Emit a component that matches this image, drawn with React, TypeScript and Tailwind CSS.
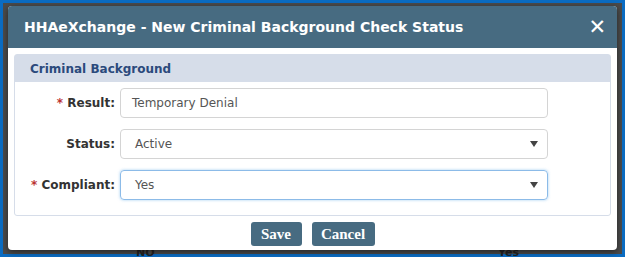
import React from "react";

const verdana = { fontFamily: '"DejaVu Sans", Verdana, sans-serif' };

function Caret() {
  return (
    <svg width="8" height="6" viewBox="0 0 8 6" className="shrink-0">
      <path d="M0 0 L8 0 L4 6 Z" fill="#444" />
    </svg>
  );
}

export default function App() {
  return (
    <div className="w-[625px] h-[257px] bg-[#0b6cc2] p-[3px] overflow-hidden" style={verdana}>
      <div className="relative w-full h-full bg-[#4b4b4b] pl-[5px] pr-[5px] pt-[3px]">
        <div className="absolute left-[133px] top-[244px] text-[11px] font-bold text-[#222] leading-none">NO</div>
        <div className="absolute left-[495px] top-[244px] text-[11px] font-bold text-[#222] leading-none">Yes</div>
        <div className="relative w-[609px] h-[244px] bg-white rounded-[4px] overflow-hidden shadow-[0_2px_6px_rgba(0,0,0,0.5)] flex flex-col">
          <div className="h-[42px] bg-[#476b81] flex items-center justify-between pl-[16px] pr-[11px] shrink-0">
            <span className="text-white font-bold text-[14px]">HHAeXchange - New Criminal Background Check Status</span>
            <span className="text-white font-bold text-[21px] leading-none">✕</span>
          </div>
          <div className="px-[6px] pt-[6px] flex-1 flex flex-col">
            <div className="border border-[#d6dde9] rounded-[3px] h-[162px] flex flex-col">
              <div className="h-[27px] bg-[#d6dde9] flex items-center pl-[15px] shrink-0">
                <span className="text-[#2b4a7c] font-bold text-[12px]">Criminal Background</span>
              </div>
              <div className="flex flex-col gap-[11px] pt-[6px]">
                <div className="flex items-center">
                  <div className="w-[105px] text-right text-[12px] font-bold text-[#333] pr-[5px]">
                    <span className="text-[#b33]">* </span>Result:
                  </div>
                  <div className="w-[428px] h-[30px] border border-[#d4d4d4] rounded-[4px] flex items-center pl-[11px] text-[12px] text-[#555]">
                    Temporary Denial
                  </div>
                </div>
                <div className="flex items-center">
                  <div className="w-[105px] text-right text-[12px] font-bold text-[#333] pr-[5px]">Status:</div>
                  <div className="w-[428px] h-[30px] border border-[#d4d4d4] rounded-[4px] flex items-center justify-between pl-[14px] pr-[9px] text-[12px] text-[#555]">
                    <span>Active</span>
                    <Caret />
                  </div>
                </div>
                <div className="flex items-center">
                  <div className="w-[105px] text-right text-[12px] font-bold text-[#333] pr-[5px]">
                    <span className="text-[#b33]">* </span>Compliant:
                  </div>
                  <div className="w-[428px] h-[30px] border border-[#8cbbe8] rounded-[4px] shadow-[0_0_3px_rgba(102,175,233,0.6)] flex items-center justify-between pl-[14px] pr-[9px] text-[12px] text-[#555]">
                    <span>Yes</span>
                    <Caret />
                  </div>
                </div>
              </div>
            </div>
            <div className="flex justify-center gap-[10px] pt-[6px]">
              <div className="w-[51px] h-[24px] bg-[#476b81] rounded-[3px] flex items-center justify-center text-white font-bold text-[15px]" style={{ fontFamily: '"Liberation Serif", serif' }}>Save</div>
              <div className="w-[63px] h-[24px] bg-[#476b81] rounded-[3px] flex items-center justify-center text-white font-bold text-[15px]" style={{ fontFamily: '"Liberation Serif", serif' }}>Cancel</div>
            </div>
          </div>
        </div>
      </div>
    </div>
  );
}
